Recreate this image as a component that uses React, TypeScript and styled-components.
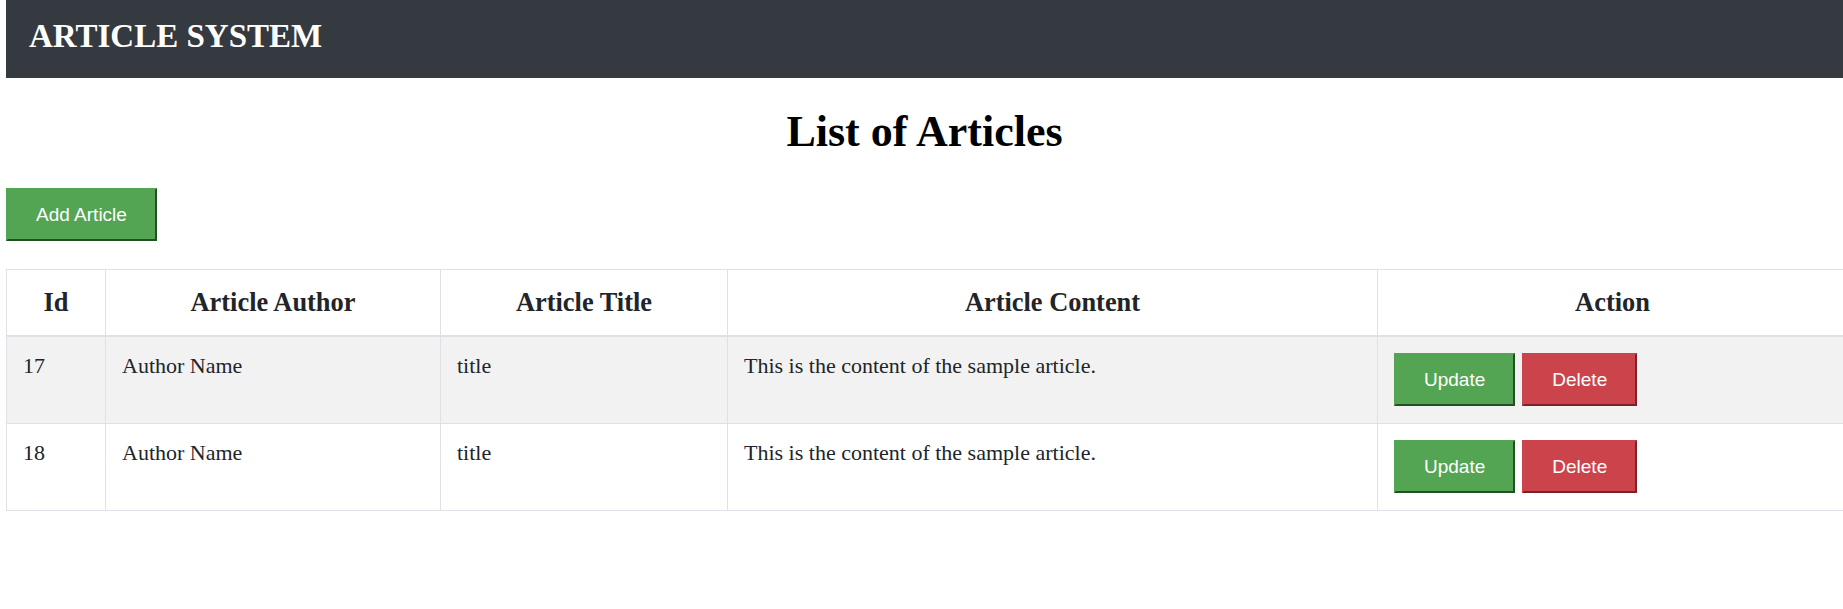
import React from "react";
import styled, { createGlobalStyle } from "styled-components";

const GlobalStyle = createGlobalStyle`
  html, body {
    margin: 0;
    padding: 0;
    background: #ffffff;
    overflow-x: hidden;
  }
  body {
    font-family: "Liberation Serif", "Times New Roman", serif;
    color: #212529;
  }
  * { box-sizing: border-box; }
`;

const Page = styled.div`
  padding-left: 6px;
  width: 1843px;
`;

const TopBar = styled.header`
  background: #343a40;
  height: 78px;
  padding: 18px 0 0 23px;
`;

const Brand = styled.div`
  font-family: "Liberation Serif", "Times New Roman", serif;
  font-weight: bold;
  font-size: 33px;
  line-height: normal;
  color: #ffffff;
`;

const Title = styled.h1`
  margin: 28px 0 31px;
  text-align: center;
  font-size: 44px;
  font-weight: bold;
  line-height: normal;
  color: #000000;
`;

const Btn = styled.button<{ $variant: "green" | "red" }>`
  font-family: "Liberation Sans", Arial, sans-serif;
  font-size: 19px;
  line-height: 23px;
  padding: 13px 28px;
  color: #ffffff;
  cursor: pointer;
  border: 2px solid;
  background: ${(p) => (p.$variant === "green" ? "#53a553" : "#cb444b")};
  border-color: ${(p) =>
    p.$variant === "green"
      ? "#53a553 #234f23 #234f23 #53a553"
      : "#cb444b #7f2227 #7f2227 #cb444b"};
`;

const AddBtn = styled(Btn)`
  width: 151px;
  display: block;
  margin-bottom: 28px;
`;

const Table = styled.table`
  width: 1842px;
  border-collapse: collapse;
  table-layout: fixed;
  font-size: 22px;
`;

const Th = styled.th`
  font-size: 26.4px;
  font-weight: bold;
  line-height: normal;
  text-align: center;
  vertical-align: bottom;
  padding: 17px 16px 17px;
  border: 1px solid #dee2e6;
  border-bottom: 2px solid #dee2e6;
  color: #212529;
`;

const Row = styled.tr<{ $striped: boolean }>`
  background: ${(p) => (p.$striped ? "#f2f2f2" : "#ffffff")};
`;

const Td = styled.td`
  padding: 16px 16px 17px;
  line-height: normal;
  vertical-align: top;
  border: 1px solid #dee2e6;
  color: #212529;
`;

const Actions = styled.div`
  display: flex;
  gap: 7px;
`;

const articles = [
  { id: 17, author: "Author Name", title: "title", content: "This is the content of the sample article." },
  { id: 18, author: "Author Name", title: "title", content: "This is the content of the sample article." },
];

export default function App() {
  return (
    <>
      <GlobalStyle />
      <Page>
        <TopBar>
          <Brand>ARTICLE SYSTEM</Brand>
        </TopBar>
        <Title>List of Articles</Title>
        <AddBtn $variant="green">Add Article</AddBtn>
        <Table>
          <colgroup>
            <col style={{ width: 99 }} />
            <col style={{ width: 335 }} />
            <col style={{ width: 287 }} />
            <col style={{ width: 650 }} />
            <col />
          </colgroup>
          <thead>
            <tr>
              <Th>Id</Th>
              <Th>Article Author</Th>
              <Th>Article Title</Th>
              <Th>Article Content</Th>
              <Th>Action</Th>
            </tr>
          </thead>
          <tbody>
            {articles.map((a, i) => (
              <Row key={a.id} $striped={i % 2 === 0}>
                <Td>{a.id}</Td>
                <Td>{a.author}</Td>
                <Td>{a.title}</Td>
                <Td>{a.content}</Td>
                <Td>
                  <Actions>
                    <Btn $variant="green">Update</Btn>
                    <Btn $variant="red">Delete</Btn>
                  </Actions>
                </Td>
              </Row>
            ))}
          </tbody>
        </Table>
      </Page>
    </>
  );
}
